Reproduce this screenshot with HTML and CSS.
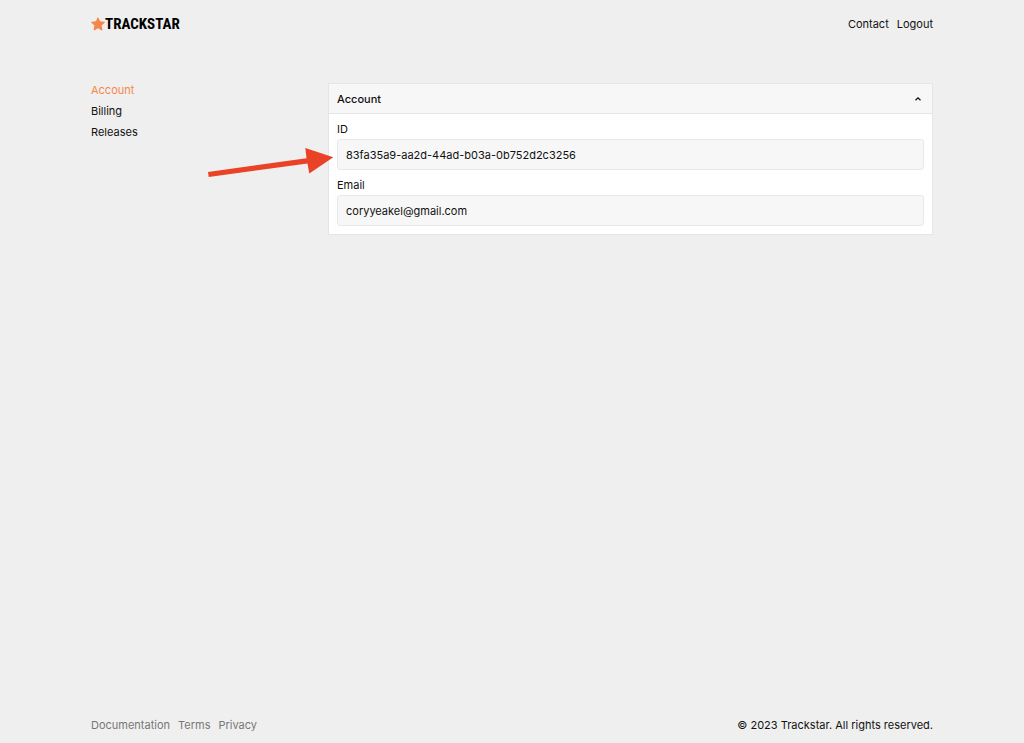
FILE: index.html
```html
<!DOCTYPE html>
<html lang="en">
<head>
    <meta charset="UTF-8">
    <meta name="viewport" content="width=device-width, initial-scale=1.0">
    <title>Trackstar</title>
    <link rel="stylesheet" href="styles.css">
</head>
<body>
    <header class="header container">
        <a class="logo" href="#">
            <svg class="logo-star" viewBox="0 0 14 14" aria-hidden="true">
                <path d="M7 .8l1.9 4 4.6.5-3.4 3.2.9 4.6L7 10.8l-4 2.3.9-4.6L.5 5.3l4.6-.5z" fill="#f5874a" stroke="#f5874a" stroke-linejoin="round"/>
            </svg>
            <span>TRACKSTAR</span>
        </a>
        <nav class="links">
            <a href="#">Contact</a>
            <a href="#">Logout</a>
        </nav>
    </header>

    <div class="content container">
        <nav class="sidebar">
            <a class="active" href="#">Account</a>
            <a href="#">Billing</a>
            <a href="#">Releases</a>
        </nav>

        <main class="panel">
            <button class="panel-header" type="button" aria-expanded="true">
                <span>Account</span>
                <svg class="chevron" viewBox="0 0 12 12" aria-hidden="true">
                    <path d="M3.5 7.3L6 4.9l2.5 2.4" fill="none" stroke="#111" stroke-width="1.3"/>
                </svg>
            </button>
            <form class="panel-body">
                <div class="field">
                    <label for="id">ID</label>
                    <input type="text" id="id" value="83fa35a9-aa2d-44ad-b03a-0b752d2c3256" readonly>
                    <svg class="arrow" viewBox="0 0 126 30" aria-hidden="true">
                        <path d="M0 25L98.5 11.3 97.3 1 125.3 10.3 101.3 26.5 99.5 16.6.7 30z" fill="#ea4226"/>
                    </svg>
                </div>
                <div class="field">
                    <label for="email">Email</label>
                    <input type="email" id="email" value="coryyeakel@gmail.com" readonly>
                </div>
            </form>
        </main>
    </div>

    <footer class="footer container">
        <nav class="links muted">
            <a href="#">Documentation</a>
            <a href="#">Terms</a>
            <a href="#">Privacy</a>
        </nav>
        <span>© 2023 Trackstar. All rights reserved.</span>
    </footer>
</body>
</html>
```

FILE: styles.css
```css
* {
    box-sizing: border-box;
}

body {
    margin: 0;
    min-height: 100vh;
    display: flex;
    flex-direction: column;
    background: #efefef;
    color: #111;
    font-family: Inter, "Liberation Sans", sans-serif;
    font-size: 11px;
    line-height: 14px;
}

a {
    color: inherit;
    text-decoration: none;
}

.container {
    width: 100%;
    max-width: 858px;
    margin: 0 auto;
    padding: 0 8px;
}

.header {
    display: flex;
    align-items: center;
    justify-content: space-between;
    height: 48px;
}

.logo {
    display: flex;
    align-items: center;
    color: #000;
    font-family: "Liberation Sans Narrow", "Roboto Condensed", "Open Sans Condensed", "DejaVu Sans Condensed", sans-serif;
    font-size: 15px;
    line-height: 20px;
    font-weight: bold;
}

.logo-star {
    width: 14px;
    height: 14px;
}

.links {
    display: flex;
    gap: 8px;
}

.muted {
    color: #777;
}

/* content */
.content {
    flex: 1;
    display: flex;
    align-items: flex-start;
    gap: 8px;
    margin-top: 35px;
}

.sidebar {
    flex: 0 0 229px;
    display: flex;
    flex-direction: column;
    align-items: flex-start;
    gap: 7px;
}

.sidebar .active {
    color: #f5874a;
}

.panel {
    flex: 1;
    background: #fff;
    border: 1px solid #e5e5e5;
}

.panel-header {
    width: 100%;
    height: 30px;
    display: flex;
    align-items: center;
    justify-content: space-between;
    padding: 0 8px;
    border: 0;
    border-bottom: 1px solid #e5e5e5;
    background: #f7f7f7;
    color: inherit;
    font: inherit;
    font-weight: 500;
}

.chevron {
    width: 12px;
    height: 12px;
}

.panel-body {
    display: flex;
    flex-direction: column;
    gap: 8px;
    padding: 8px;
}

.field {
    position: relative;
    display: flex;
    flex-direction: column;
    gap: 3px;
}

.field input {
    width: 100%;
    height: 31px;
    padding: 0 8px;
    border: 1px solid #e8e8e8;
    border-radius: 3px;
    background: #f7f7f7;
    color: inherit;
    font: inherit;
}

/* arrow pointing at the ID */
.arrow {
    position: absolute;
    top: 25px;
    left: -129px;
    width: 126px;
    height: 30px;
}

.footer {
    display: flex;
    align-items: center;
    justify-content: space-between;
    height: 36px;
}
```
